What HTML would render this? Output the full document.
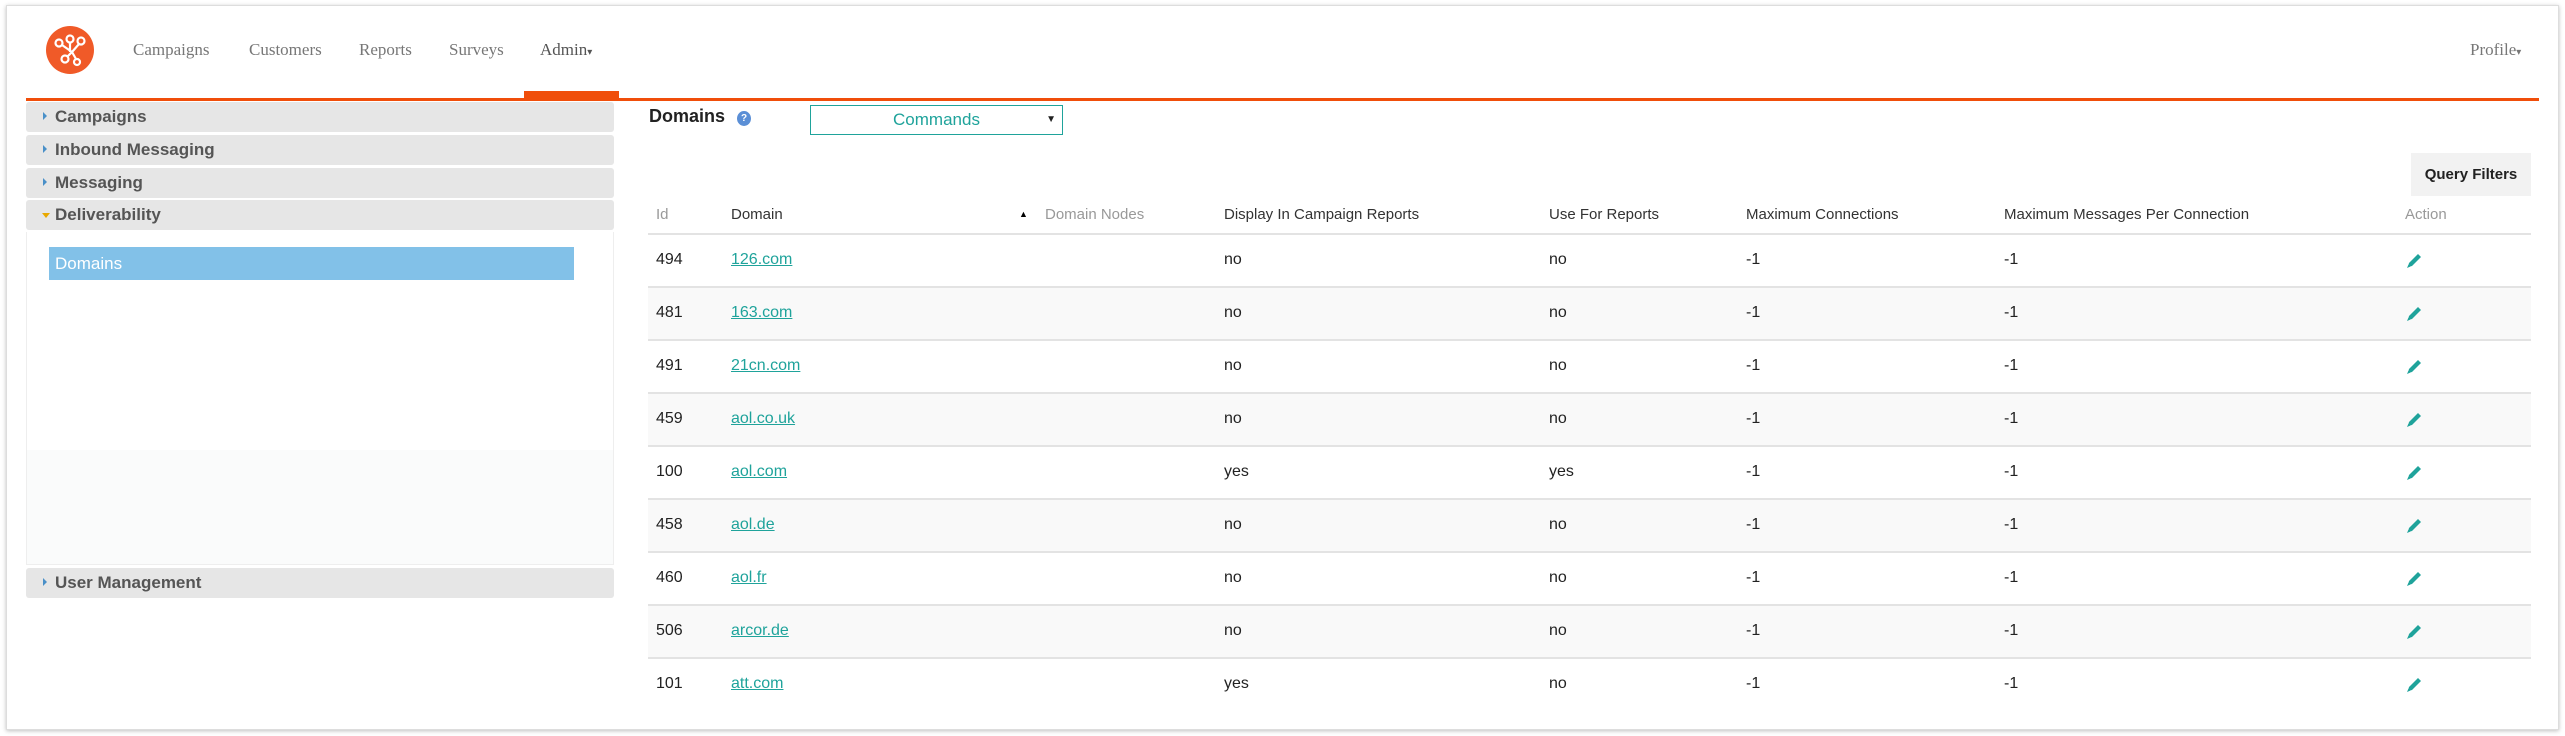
<!DOCTYPE html>
<html><head><meta charset="utf-8"><style>
*{margin:0;padding:0;box-sizing:border-box}
body{width:2565px;height:736px;background:#fff;font-family:"Liberation Sans",sans-serif;position:relative;overflow:hidden}
.card{position:absolute;left:6px;top:5px;width:2553px;height:725px;border:1px solid #ddd;box-shadow:0 1px 4px rgba(0,0,0,.25);background:#fff}
.a{position:absolute;white-space:nowrap}
.nav{font-family:"Liberation Serif",serif;font-size:17px;color:#777;top:40px}
.side{position:absolute;left:26px;width:588px;height:30px;background:#e6e6e6;border-radius:3px;font-weight:bold;font-size:17px;color:#555;line-height:30px;padding-left:29px}
.side i{position:absolute;left:17px;top:10px;border-left:4px solid #4a90c8;border-top:4px solid transparent;border-bottom:4px solid transparent}
.h{font-size:15px;color:#333;top:206px}
.row{position:absolute;left:648px;width:1883px;height:53px;border-top:2px solid #e3e3e3}
.row span{position:absolute;top:16px;font-size:16px;color:#222}
.row a{color:#1fa39b;text-decoration:underline}
</style></head><body>
<div class="card"></div>
<svg class="a" style="left:46px;top:26px" width="48" height="48" viewBox="0 0 48 48"><circle cx="24" cy="24" r="24" fill="#f05a28"/><g stroke="#fff" stroke-width="2.2" fill="none"><circle cx="13" cy="17" r="3.5"/><circle cx="24" cy="13" r="3.5"/><circle cx="35" cy="15" r="3.5"/><circle cx="19" cy="33" r="3.5"/><circle cx="31" cy="36" r="3"/><path d="M16 19L26 26M24 16.5V26M33 18L26 26M26 26L21 31M26 26L30 33"/></g></svg>
<div class="a nav" style="left:133px">Campaigns</div>
<div class="a nav" style="left:249px">Customers</div>
<div class="a nav" style="left:359px">Reports</div>
<div class="a nav" style="left:449px">Surveys</div>
<div class="a nav" style="left:540px;color:#555">Admin<span style="font-size:10px">▾</span></div>
<div class="a nav" style="left:2470px">Profile<span style="font-size:10px">▾</span></div>
<div class="a" style="left:524px;top:91px;width:95px;height:8px;background:#f04e0a"></div>
<div class="a" style="left:26px;top:98px;width:2513px;height:3px;background:#f04e0a"></div>
<div class="a" style="left:26px;top:232px;width:588px;height:333px;border:1px solid #eee;border-top:none;background:linear-gradient(#fff 0,#fff 218px,#fafbfb 218px)"></div>
<div class="side" style="top:102px"><i></i>Campaigns</div>
<div class="side" style="top:135px"><i></i>Inbound Messaging</div>
<div class="side" style="top:168px"><i></i>Messaging</div>
<div class="side" style="top:200px"><i style="border:4px solid transparent;border-top:5px solid #e8a800;border-bottom:none;left:16px;top:13px"></i>Deliverability</div>
<div class="a" style="left:49px;top:247px;width:525px;height:33px;background:#82c1e8;color:#fff;font-size:17px;line-height:33px;padding-left:6px">Domains</div>
<div class="side" style="top:568px"><i></i>User Management</div>
<div class="a" style="left:649px;top:106px;font-size:18px;font-weight:bold;color:#222">Domains</div>
<div class="a" style="left:737px;top:111px;width:14px;height:15px;border-radius:50%;background:#5b8fd6;color:#fff;font-size:10px;text-align:center;line-height:15px;font-weight:bold">?</div>
<div class="a" style="left:810px;top:105px;width:253px;height:30px;border:1px solid #1fa39b;color:#1fa39b;font-size:17px;text-align:center;line-height:28px">Commands<span style="position:absolute;right:6px;color:#222;font-size:10px">▼</span></div>
<div class="a" style="left:2411px;top:153px;width:120px;height:43px;background:#f2f2f2;font-size:15px;font-weight:bold;color:#222;text-align:center;line-height:43px">Query Filters</div>
<div class="a h" style="left:656px;color:#999">Id</div>
<div class="a h" style="left:731px">Domain</div>
<div class="a" style="left:1019px;top:209px;font-size:9px">▲</div>
<div class="a h" style="left:1045px;color:#999">Domain Nodes</div>
<div class="a h" style="left:1224px">Display In Campaign Reports</div>
<div class="a h" style="left:1549px">Use For Reports</div>
<div class="a h" style="left:1746px">Maximum Connections</div>
<div class="a h" style="left:2004px">Maximum Messages Per Connection</div>
<div class="a h" style="left:2405px;color:#999">Action</div>
<div id="rows"></div>
<script>
var d=[["494","126.com","no","no"],["481","163.com","no","no"],["491","21cn.com","no","no"],["459","aol.co.uk","no","no"],["100","aol.com","yes","yes"],["458","aol.de","no","no"],["460","aol.fr","no","no"],["506","arcor.de","no","no"],["101","att.com","yes","no"]];
var h="";d.forEach(function(r,i){h+='<div class="row" style="top:'+(233+53*i)+'px;background:'+(i%2?'#f9f9f9':'#fff')+'"><span style="left:8px">'+r[0]+'</span><span style="left:83px"><a>'+r[1]+'</a></span><span style="left:576px">'+r[2]+'</span><span style="left:901px">'+r[3]+'</span><span style="left:1098px">-1</span><span style="left:1356px">-1</span><svg style="position:absolute;left:1757px;top:17px" width="18" height="18" viewBox="0 0 18 18"><path d="M3 15L4 11L13 2L16 5L7 14Z" fill="#1fa39b"/><path d="M2 16L3.5 12.5L5.5 14.5Z" fill="#1fa39b"/></svg></div>'});
document.getElementById("rows").innerHTML=h;
</script>
</body></html>
